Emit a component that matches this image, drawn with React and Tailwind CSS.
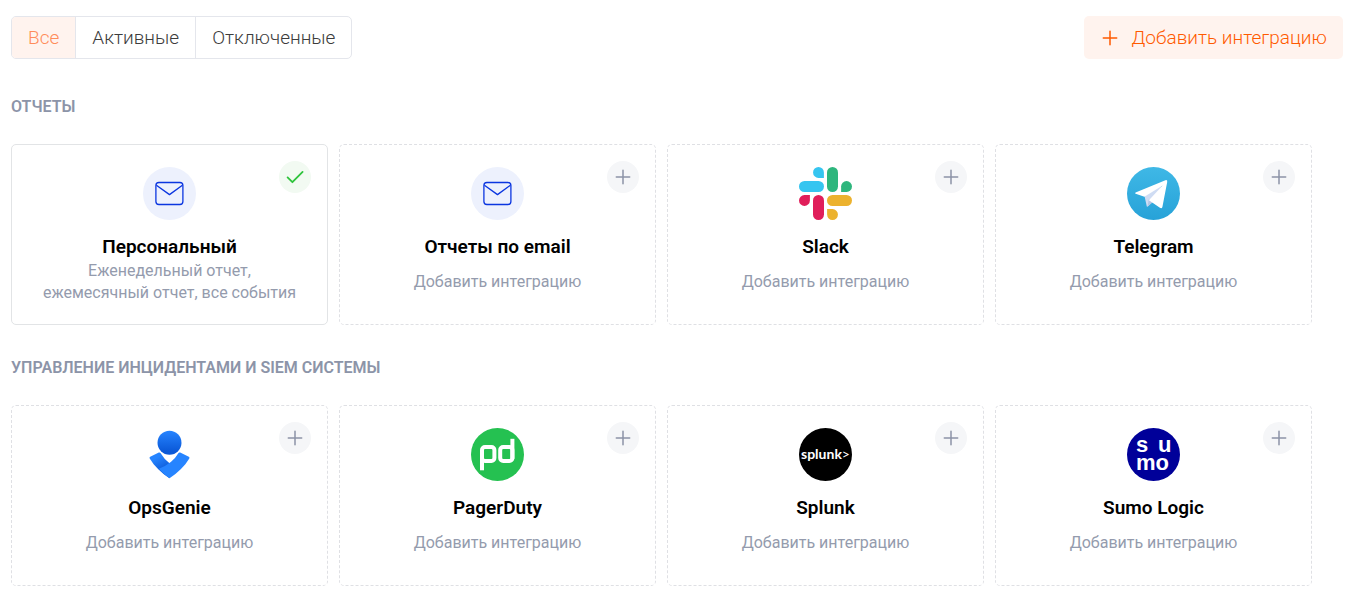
import { useState } from "react";

function MailIcon() {
  return (
    <svg viewBox="0 0 53 53" className="size-full" fill="none" aria-hidden="true">
      <circle cx="26.5" cy="26.5" r="26.5" fill="#edf1fd" />
      <g stroke="#0b36e0" strokeWidth="1.3" strokeLinejoin="round">
        <rect x="12.9" y="15.5" width="27" height="22" rx="3" />
        <path d="M13.4 18.2 26.5 27.6 39.4 18.2" />
      </g>
    </svg>
  );
}

function SlackIcon() {
  return (
    <svg viewBox="0 0 53 53" className="size-full" aria-hidden="true">
      <g fill="#36c5f0">
        <path d="M19.5 0a5.4 5.4 0 0 0 0 10.9h5.4V5.4A5.4 5.4 0 0 0 19.5 0Z" />
        <rect x="0" y="14" width="25" height="11" rx="5.5" />
      </g>
      <g fill="#2eb67d">
        <rect x="28" y="0" width="11" height="25" rx="5.5" />
        <path d="M53 19.5a5.4 5.4 0 0 0-10.9 0v5.4h5.5a5.4 5.4 0 0 0 5.4-5.4Z" />
      </g>
      <g fill="#ecb22e">
        <rect x="28" y="28" width="25" height="11" rx="5.5" />
        <path d="M33.5 53a5.4 5.4 0 0 0 0-10.9h-5.4v5.5a5.4 5.4 0 0 0 5.4 5.4Z" />
      </g>
      <g fill="#e01e5a">
        <rect x="14" y="28" width="11" height="25" rx="5.5" />
        <path d="M0 33.5a5.4 5.4 0 0 0 10.9 0v-5.4H5.4A5.4 5.4 0 0 0 0 33.5Z" />
      </g>
    </svg>
  );
}

function TelegramIcon() {
  return (
    <svg viewBox="0 0 53 53" className="size-full" aria-hidden="true">
      <defs>
        <linearGradient id="telegram-sky" x1="0" y1="0" x2="0" y2="1">
          <stop offset="0" stopColor="#3fb8e6" />
          <stop offset="1" stopColor="#27a2d8" />
        </linearGradient>
      </defs>
      <circle cx="26.5" cy="26.5" r="26.5" fill="url(#telegram-sky)" />
      <path d="M17.5 29 19.8 39.6Q20.6 39.8 21.4 38.9L26 34.4 36 17Z" fill="#cfdcf3" />
      <path d="M20.6 39.2 21.8 32.2 26.4 34.8Z" fill="#b3c5e6" />
      <path
        d="M8.6 25.4 38.4 13.2Q40.6 12.6 40.2 15L35.4 40Q34.7 42 32.9 40.8L21.9 33.2 35.6 18.6 17.4 29.8 8.7 26.8Q7.4 26 8.6 25.4Z"
        fill="#fff"
      />
    </svg>
  );
}

function OpsGenieIcon() {
  return (
    <svg viewBox="0 0 53 53" className="size-full" aria-hidden="true">
      <defs>
        <linearGradient id="opsgenie-head" x1="0" y1="0" x2="0" y2="1">
          <stop offset="0" stopColor="#2684ff" />
          <stop offset="0.85" stopColor="#0b59d8" />
        </linearGradient>
        <linearGradient id="opsgenie-arm" x1="0.3" y1="0.2" x2="0.6" y2="0.75">
          <stop offset="0" stopColor="#2684ff" />
          <stop offset="1" stopColor="#0b57d4" />
        </linearGradient>
      </defs>
      <circle cx="26.5" cy="14.8" r="12" fill="url(#opsgenie-head)" />
      <path
        d="M26.5 50.2C18.2 45 11.5 38.3 6.7 30.5Q6.1 29.4 7.2 28.8L15.8 24.6Q16.9 24.1 17.5 25.1 21.3 31.6 26.8 35.6L31 39Z"
        fill="url(#opsgenie-arm)"
      />
      <path
        d="M26.5 50.2C34.8 45 41.5 38.3 46.3 30.5Q46.9 29.4 45.8 28.8L37.2 24.6Q36.1 24.1 35.5 25.1 29.6 35.6 15.8 40.8 20.2 46 25.8 49.8Q26.5 50.3 26.5 50.2Z"
        fill="#2684ff"
      />
    </svg>
  );
}

function PagerDutyIcon() {
  return (
    <svg viewBox="0 0 53 53" className="size-full" fill="none" aria-hidden="true">
      <circle cx="26.5" cy="26.5" r="26.5" fill="#25c151" />
      <g stroke="#fff" strokeWidth="4">
        <rect x="11" y="19" width="12.4" height="14" rx="3" />
        <line x1="11" y1="22" x2="11" y2="42.3" />
        <rect x="29.2" y="19" width="12.2" height="14" rx="3" />
        <line x1="41.4" y1="10.8" x2="41.4" y2="31" />
      </g>
    </svg>
  );
}

function SplunkIcon() {
  return (
    <svg viewBox="0 0 53 53" className="size-full" aria-hidden="true">
      <circle cx="26.5" cy="26.5" r="26.5" fill="#000" />
      <text x="26.5" y="30.5" textAnchor="middle" fill="#fff" className="font-[Lato,sans-serif] text-[14px] font-bold">
        splunk<tspan className="font-normal">&gt;</tspan>
      </text>
    </svg>
  );
}

function SumoLogicIcon() {
  return (
    <svg viewBox="0 0 53 53" className="size-full" aria-hidden="true">
      <circle cx="26.5" cy="26.5" r="26.5" fill="#000099" />
      <text fill="#fff" className="font-['Liberation_Sans',sans-serif] text-[22px] font-bold">
        <tspan x="9" y="24">s</tspan>
        <tspan x="31" y="24">u</tspan>
        <tspan x="9" y="41.5">mo</tspan>
      </text>
    </svg>
  );
}

function PlusIcon() {
  return (
    <svg viewBox="0 0 16 16" className="size-4" stroke="currentColor" strokeWidth="1.5" strokeLinecap="round" aria-hidden="true">
      <path d="M8 1.3v13.4M1.3 8h13.4" />
    </svg>
  );
}

function CheckIcon() {
  return (
    <svg viewBox="0 0 18 14" className="h-3.5 w-[18px]" fill="none" stroke="currentColor" strokeWidth="1.8" strokeLinecap="round" strokeLinejoin="round" aria-hidden="true">
      <path d="M1.6 7.4 6.4 12.2 16.6 1.9" />
    </svg>
  );
}

const filters = ["Все", "Активные", "Отключенные"];

const sections = [
  {
    title: "Отчеты",
    items: [
      { name: "Персональный", Icon: MailIcon, active: true, note: "Еженедельный отчет, ежемесячный отчет, все события" },
      { name: "Отчеты по email", Icon: MailIcon },
      { name: "Slack", Icon: SlackIcon },
      { name: "Telegram", Icon: TelegramIcon },
    ],
  },
  {
    title: "Управление инцидентами и SIEM системы",
    items: [
      { name: "OpsGenie", Icon: OpsGenieIcon },
      { name: "PagerDuty", Icon: PagerDutyIcon },
      { name: "Splunk", Icon: SplunkIcon },
      { name: "Sumo Logic", Icon: SumoLogicIcon },
    ],
  },
];

function IntegrationCard({ name, Icon, active, note }) {
  return (
    <article
      className={`relative flex min-h-[181px] flex-col items-center rounded-[5px] border px-6 pt-[22px] pb-5 text-center ${
        active ? "border-[#e2e4e6]" : "border-dashed border-[#dfe0e4]"
      }`}
    >
      <div className="size-[53px]">
        <Icon />
      </div>
      <h3 className="mt-3.5 text-[19px] leading-[26px] font-semibold text-black">{name}</h3>
      <p className={`text-base leading-[22px] text-[#949bad] ${active ? "" : "mt-[11px]"}`}>{note ?? "Добавить интеграцию"}</p>
      <button
        type="button"
        aria-label={name}
        className={`absolute top-4 right-4 flex size-8 items-center justify-center rounded-full ${
          active ? "bg-[#f2faf2] text-[#2fc43c]" : "bg-[#f5f6f8] text-[#8c93a6]"
        }`}
      >
        {active ? <CheckIcon /> : <PlusIcon />}
      </button>
    </article>
  );
}

export default function App() {
  const [filter, setFilter] = useState(filters[0]);

  return (
    <main className="bg-white pt-4 pr-10 pb-4 pl-[11px] font-[Roboto,sans-serif]">
      <header className="-mr-[31px] flex items-center justify-between">
        <div className="flex divide-x divide-[#e4e6ec] overflow-hidden rounded-[5px] border border-[#e4e6ec]">
          {filters.map((label) => (
            <button
              key={label}
              type="button"
              aria-pressed={filter === label}
              onClick={() => setFilter(label)}
              className={`h-[41px] px-4 pt-0.5 text-[19px] font-light ${filter === label ? "bg-[#fff3ee] text-[#ff8c5a]" : "text-[#3c3c3c]"}`}
            >
              {label}
            </button>
          ))}
        </div>
        <button type="button" className="flex h-[43px] items-center gap-3 rounded-[5px] bg-[#fff3ee] px-4 text-[19px] font-light text-[#ff5a00]">
          <span className="flex w-5 justify-center">
            <PlusIcon />
          </span>
          <span className="pt-0.5">Добавить интеграцию</span>
        </button>
      </header>

      {sections.map((section, i) => (
        <section key={section.title} className={i === 0 ? "mt-9" : "mt-[31px]"}>
          <h2 className="text-base leading-6 font-semibold text-[#8c94a8] uppercase">{section.title}</h2>
          <div className="mt-[25px] grid grid-cols-4 gap-[11px]">
            {section.items.map((item) => (
              <IntegrationCard key={item.name} {...item} />
            ))}
          </div>
        </section>
      ))}
    </main>
  );
}
